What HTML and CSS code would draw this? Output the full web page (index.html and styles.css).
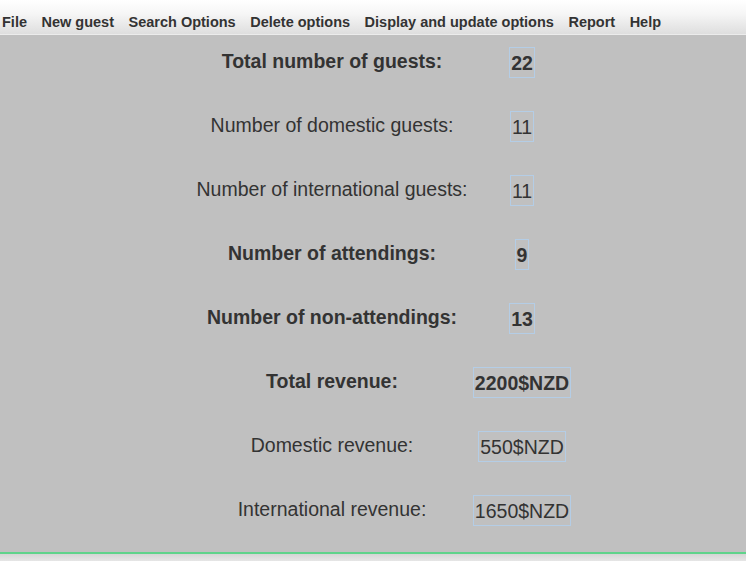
FILE: index.html
```html
<!DOCTYPE html>
<html>
<head>
<meta charset="utf-8">
<link rel="stylesheet" href="styles.css">
</head>
<body>
<div class="app">
  <nav class="menubar">
    <span class="menu">File</span>
    <span class="menu">New guest</span>
    <span class="menu">Search Options</span>
    <span class="menu">Delete options</span>
    <span class="menu">Display and update options</span>
    <span class="menu">Report</span>
    <span class="menu">Help</span>
  </nav>
  <main class="content">
    <div class="stats">
      <div class="label bold"><span>Total number of guests:</span></div>
      <div class="value"><span class="box bold">22</span></div>

      <div class="label"><span>Number of domestic guests:</span></div>
      <div class="value"><span class="box">11</span></div>

      <div class="label"><span>Number of international guests:</span></div>
      <div class="value"><span class="box">11</span></div>

      <div class="label bold"><span>Number of attendings:</span></div>
      <div class="value"><span class="box bold">9</span></div>

      <div class="label bold"><span>Number of non-attendings:</span></div>
      <div class="value"><span class="box bold">13</span></div>

      <div class="label bold"><span>Total revenue:</span></div>
      <div class="value"><span class="box bold">2200$NZD</span></div>

      <div class="label"><span>Domestic revenue:</span></div>
      <div class="value"><span class="box">550$NZD</span></div>

      <div class="label"><span>International revenue:</span></div>
      <div class="value"><span class="box">1650$NZD</span></div>
    </div>
  </main>
  <footer class="statusbar"></footer>
</div>
</body>
</html>
```
FILE: styles.css
```css
* { box-sizing: border-box; }
html, body { margin: 0; padding: 0; }
body {
  font-family: "Liberation Sans", Arial, sans-serif;
  color: #333333;
  background: #c0c0c0;
}
.app {
  display: flex;
  flex-direction: column;
  height: 561px;
  overflow: hidden;
}
.menubar {
  flex: 0 0 35px;
  display: flex;
  gap: 14.5px;
  padding: 14px 0 0 2px;
  background: linear-gradient(#ffffff 0%, #f6f6f6 40%, #dedede 100%);
  border-bottom: 1px solid #ececec;
  font-weight: bold;
  font-size: 14.5px;
  line-height: 17px;
  white-space: nowrap;
}
.content {
  flex: 1 1 auto;
  overflow: hidden;
  padding-top: 12px;
}
.stats {
  display: grid;
  grid-template-columns: 190px 190px;
  grid-auto-rows: 64px;
  padding-left: 237px;
  font-size: 19.5px;
  line-height: 23px;
}
.label {
  display: flex;
  justify-content: center;
  align-items: flex-start;
  padding-top: 3px;
  white-space: nowrap;
}
.value {
  display: flex;
  justify-content: center;
  align-items: flex-start;
  white-space: nowrap;
}
.box {
  display: block;
  border: 1px solid #b4cde6;
  padding: 4px 1px 2px;
}
.bold { font-weight: bold; }
.statusbar {
  flex: 0 0 9px;
  border-top: 2px solid #5fd38b;
  background: linear-gradient(#d4d4d4, #e6e6e6);
}
```
